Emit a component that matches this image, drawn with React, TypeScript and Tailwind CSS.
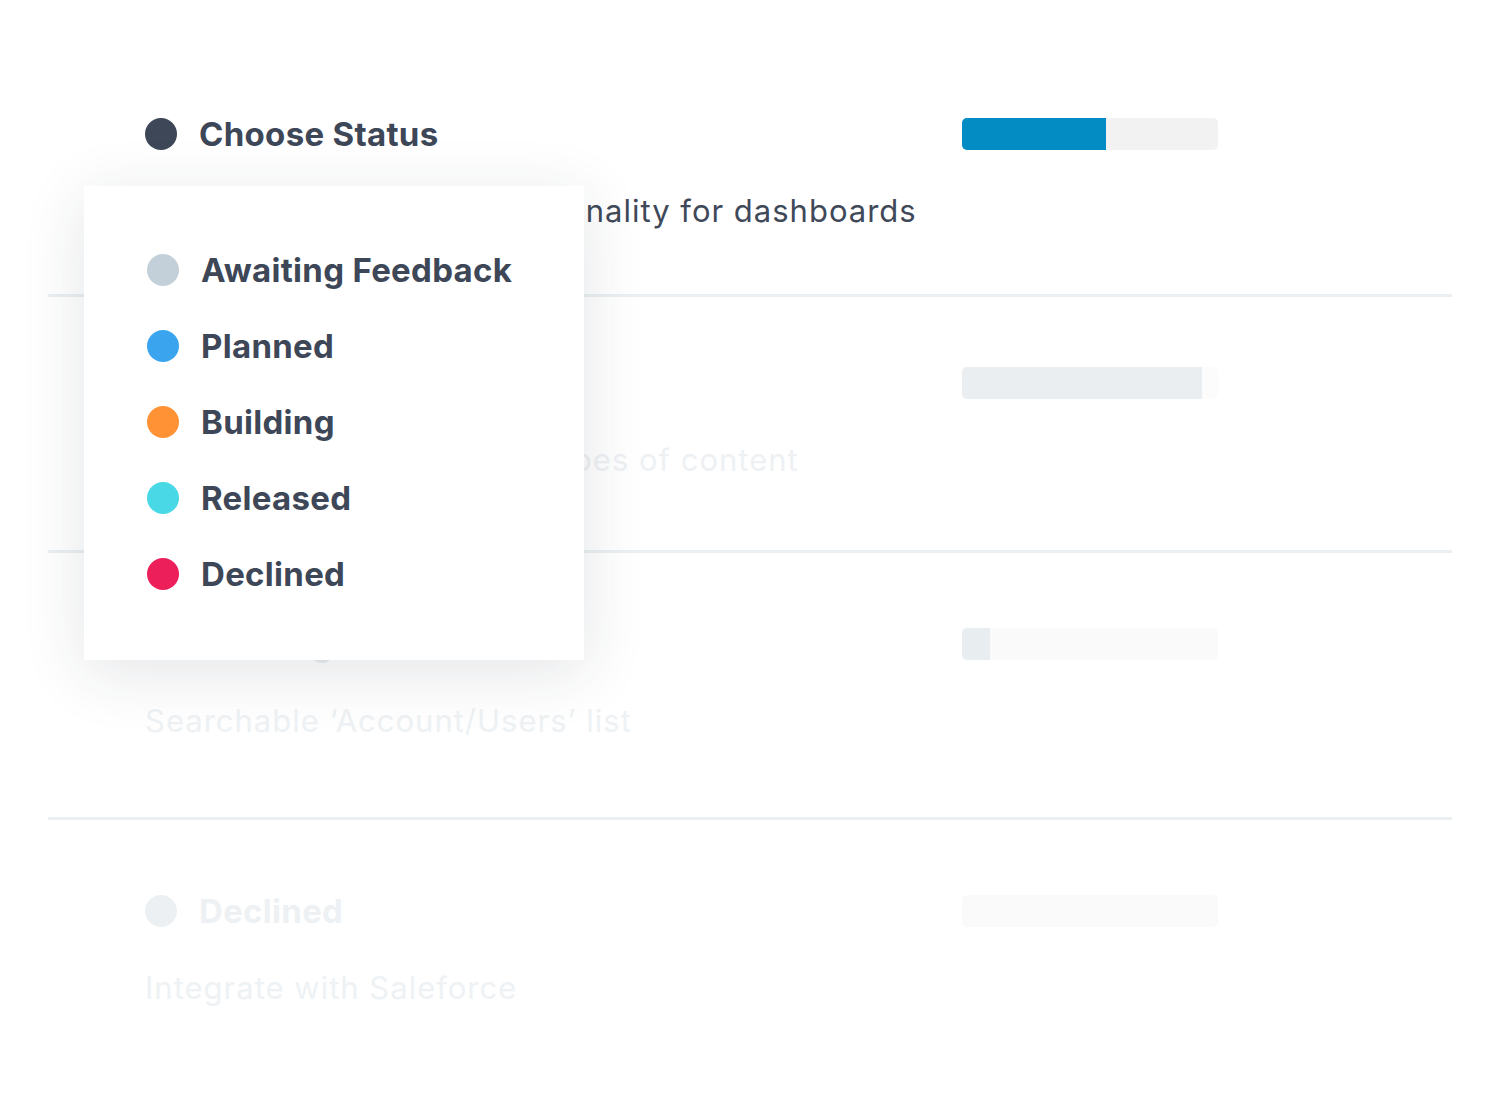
import React from 'react';

const font = { fontFamily: 'Inter, Lato, "Liberation Sans", sans-serif' };

interface RowProps {
  title: string;
  description: string;
  dot: string;
  titleColor: string;
  descColor: string;
  fill: string;
  track: string;
  percent: number;
  className: string;
  divider?: boolean;
}

const Row: React.FC<RowProps> = ({
  title,
  description,
  dot,
  titleColor,
  descColor,
  fill,
  track,
  percent,
  className,
  divider = true,
}) => (
  <div className={`${className} ${divider ? 'border-b-[3px] border-[#eaeff1]' : ''}`}>
    <div className="flex items-center pl-[97px]">
      <div className="flex items-center w-[817px] h-[40px]">
        <span className={`w-[32px] h-[32px] rounded-full ${dot}`} />
        <span className={`ml-[22px] text-[33px] font-bold tracking-[0.3px] leading-[40px] ${titleColor}`}>{title}</span>
      </div>
      <div className={`w-[256px] h-[32px] rounded-[5px] overflow-hidden ${track}`}>
        <div className={`h-full ${fill}`} style={{ width: `${percent}%` }} />
      </div>
    </div>
    <p className={`pl-[97px] mt-[37px] text-[31px] tracking-[1px] leading-[40px] ${descColor}`}>{description}</p>
  </div>
);

const statuses = [
  { label: 'Awaiting Feedback', color: 'bg-[#c3d0d9]' },
  { label: 'Planned', color: 'bg-[#3aa5ee]' },
  { label: 'Building', color: 'bg-[#ff9234]' },
  { label: 'Released', color: 'bg-[#48d8e6]' },
  { label: 'Declined', color: 'bg-[#ec1f5a]' },
];

export default function App() {
  return (
    <div className="relative w-[1500px] h-[1120px] bg-white overflow-hidden" style={font}>
      <div className="px-[48px]">
        <Row
          className="pt-[114px] pb-[63px]"
          title="Choose Status"
          description="Add export and filter functionality for dashboards"
          dot="bg-[#3d4757]"
          titleColor="text-[#3d4757]"
          descColor="text-[#3f4959]"
          fill="bg-[#038bc4]"
          track="bg-[#f2f2f2]"
          percent={56.25}
        />
        <Row
          className="pt-[66px] pb-[70px]"
          title="Planned"
          description="Add support for different types of content"
          dot="bg-[#edf1f3]"
          titleColor="text-[#edf1f3]"
          descColor="text-[#eef1f4]"
          fill="bg-[#ebeef1]"
          track="bg-[#fcfcfc]"
          percent={93.75}
        />
        <Row
          className="pt-[71px] pb-[76px]"
          title="Building"
          description="Searchable ‘Account/Users’ list"
          dot="bg-[#edf1f3]"
          titleColor="text-[#e8edf0]"
          descColor="text-[#eef2f4]"
          fill="bg-[#e8edf0]"
          track="bg-[#fafafa]"
          percent={11}
        />
        <Row
          className="pt-[71px]"
          title="Declined"
          description="Integrate with Saleforce"
          dot="bg-[#ecf0f2]"
          titleColor="text-[#edf1f3]"
          descColor="text-[#eef2f4]"
          fill="bg-[#fafafa]"
          track="bg-[#fafafa]"
          percent={0}
          divider={false}
        />
      </div>

      <div className="absolute left-[84px] top-[186px] w-[500px] h-[474px] bg-white shadow-[0_12px_60px_rgba(30,40,60,0.12)] pt-[64px] pl-[63px]">
        <ul className="flex flex-col gap-[36px]">
          {statuses.map((s) => (
            <li key={s.label} className="flex items-center h-[40px]">
              <span className={`w-[32px] h-[32px] rounded-full ${s.color}`} />
              <span className="ml-[22px] text-[33px] font-bold tracking-[0.3px] leading-[40px] text-[#3d4757]">{s.label}</span>
            </li>
          ))}
        </ul>
      </div>
    </div>
  );
}
